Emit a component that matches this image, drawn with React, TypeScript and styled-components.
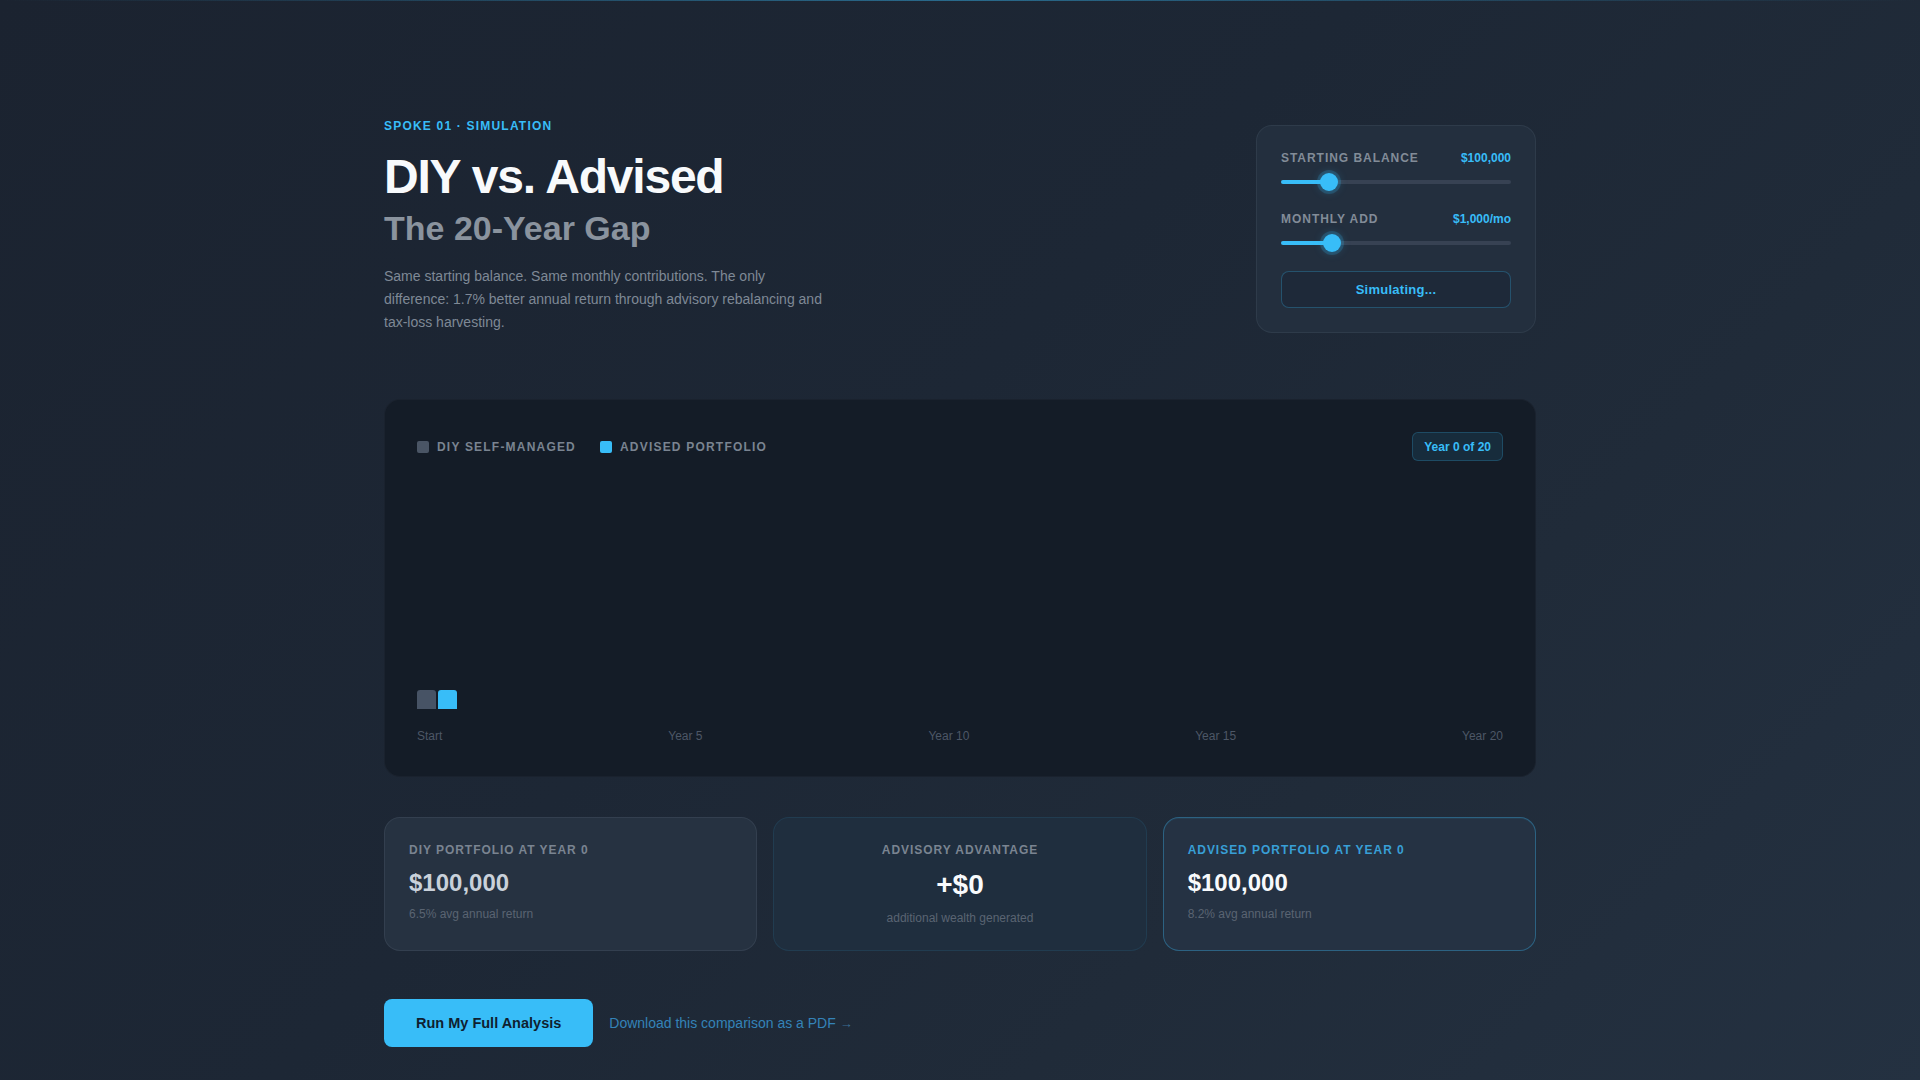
import React from 'react';
import styled, {createGlobalStyle} from 'styled-components';

const GlobalStyle = createGlobalStyle`
    * {
        box-sizing: border-box;
    }

    body {
        margin: 0;
        font-family: "Liberation Sans", Arial, sans-serif;
        background: #1c2532;
        -webkit-font-smoothing: antialiased;
    }
`;

const sky = '#38bdf8';

type SliderProps = {
    value: number
    min: number
    max: number
}

const Slider = ({value, min, max}: SliderProps) => {
    const pct = (value - min) / (max - min);
    // thumb is 18px wide, keep it inside the track
    const center = `calc(9px + (100% - 18px) * ${pct})`;
    return (
        <SliderWrap>
            <Track>
                <Fill style={{width: center}}/>
            </Track>
            <Thumb style={{left: center}}/>
        </SliderWrap>
    );
};

const years = Array.from({length: 21}, (_, i) => i);
const maxValue = 1200000;
const chartHeight = 228;

const barHeight = (year: number, v: number) => (year === 0 ? (v / maxValue) * chartHeight : 0);

export default function App() {
    return (
        <Page>
            <GlobalStyle/>
            <Container>
                <Header>
                    <Intro>
                        <Eyebrow>Spoke 01 · Simulation</Eyebrow>
                        <Title>DIY vs. Advised</Title>
                        <Subtitle>The 20-Year Gap</Subtitle>
                        <Lead>
                            Same starting balance. Same monthly contributions. The only difference: 1.7% better
                            annual return through advisory rebalancing and tax-loss harvesting.
                        </Lead>
                    </Intro>

                    <Controls>
                        <ControlRow>
                            <ControlLabel>Starting Balance</ControlLabel>
                            <ControlValue>$100,000</ControlValue>
                        </ControlRow>
                        <Slider value={100000} min={10000} max={500000}/>

                        <ControlRow $spaced>
                            <ControlLabel>Monthly Add</ControlLabel>
                            <ControlValue>$1,000/mo</ControlValue>
                        </ControlRow>
                        <Slider value={1000} min={0} max={5000}/>

                        <SimButton>Simulating...</SimButton>
                    </Controls>
                </Header>

                <ChartPanel>
                    <ChartHeader>
                        <Legend>
                            <LegendItem>
                                <Swatch $color="#4a5565"/>
                                DIY Self-Managed
                            </LegendItem>
                            <LegendItem>
                                <Swatch $color={sky}/>
                                Advised Portfolio
                            </LegendItem>
                        </Legend>
                        <YearBadge>Year 0 of 20</YearBadge>
                    </ChartHeader>

                    <Bars>
                        {years.map(year => (
                            <BarGroup key={year}>
                                <Bar $color="#475365" style={{height: barHeight(year, 100000)}}/>
                                <Bar $color={sky} style={{height: barHeight(year, 100000)}}/>
                            </BarGroup>
                        ))}
                    </Bars>

                    <Axis>
                        <span>Start</span>
                        <span>Year 5</span>
                        <span>Year 10</span>
                        <span>Year 15</span>
                        <span>Year 20</span>
                    </Axis>
                </ChartPanel>

                <Stats>
                    <StatCard $variant="diy">
                        <StatLabel $variant="diy">DIY Portfolio at Year 0</StatLabel>
                        <StatValue $variant="diy">$100,000</StatValue>
                        <StatNote>6.5% avg annual return</StatNote>
                    </StatCard>
                    <StatCard $variant="gap">
                        <StatLabel $variant="gap">Advisory Advantage</StatLabel>
                        <StatValue $variant="gap">+$0</StatValue>
                        <StatNote>additional wealth generated</StatNote>
                    </StatCard>
                    <StatCard $variant="advised">
                        <StatLabel $variant="advised">Advised Portfolio at Year 0</StatLabel>
                        <StatValue $variant="advised">$100,000</StatValue>
                        <StatNote>8.2% avg annual return</StatNote>
                    </StatCard>
                </Stats>

                <Actions>
                    <PrimaryButton>Run My Full Analysis</PrimaryButton>
                    <PdfLink href="#">Download this comparison as a PDF <Arrow>→</Arrow></PdfLink>
                </Actions>
            </Container>
        </Page>
    );
}

type Variant = 'diy' | 'gap' | 'advised'

const Page = styled.div`
    position: relative;
    min-height: 100vh;
    background: linear-gradient(135deg, #1b2330 0%, #1d2735 45%, #202b39 70%, #243141 100%);

    &::before {
        content: "";
        position: absolute;
        top: 0;
        left: 0;
        right: 0;
        height: 1px;
        background: linear-gradient(90deg, transparent 0%, rgba(56, 189, 248, 0.45) 50%, transparent 100%);
    }
`;

const Container = styled.div`
    max-width: 1152px;
    margin: 0 auto;
    padding: 118px 0 40px;
`;

const Header = styled.header`
    display: flex;
    justify-content: space-between;
    align-items: flex-start;
`;

const Intro = styled.div`
    display: flex;
    flex-direction: column;
`;

const Eyebrow = styled.div`
    font-size: 12px;
    line-height: 16px;
    font-weight: 700;
    letter-spacing: 0.1em;
    text-transform: uppercase;
    color: ${sky};
`;

const Title = styled.h1`
    margin: 17px 0 0;
    font-size: 48px;
    line-height: 1.1;
    font-weight: 700;
    letter-spacing: -0.025em;
    color: #f8fafc;
`;

const Subtitle = styled.h2`
    margin: 4px 0 0;
    font-size: 34px;
    line-height: 1.2;
    font-weight: 700;
    color: #8a939e;
`;

const Lead = styled.p`
    margin: 16px 0 0;
    max-width: 440px;
    font-size: 14px;
    line-height: 23.3px;
    color: #7f8996;
`;

const Controls = styled.div`
    width: 280px;
    margin-top: 7px;
    padding: 25px 24px 24px;
    display: flex;
    flex-direction: column;
    background: #232f3e;
    border: 1px solid rgba(148, 163, 184, 0.1);
    border-radius: 16px;
`;

const ControlRow = styled.div<{ $spaced?: boolean }>`
    display: flex;
    justify-content: space-between;
    align-items: center;
    height: 14px;
    margin-top: ${p => (p.$spaced ? '20px' : '0')};
`;

const ControlLabel = styled.span`
    font-size: 12px;
    font-weight: 700;
    letter-spacing: 0.08em;
    text-transform: uppercase;
    color: #828c98;
`;

const ControlValue = styled.span`
    font-size: 12px;
    font-weight: 700;
    color: ${sky};
`;

const SliderWrap = styled.div`
    position: relative;
    height: 20px;
    margin-top: 7px;
    display: flex;
    align-items: center;
`;

const Track = styled.div`
    width: 100%;
    height: 4px;
    border-radius: 2px;
    background: #374253;
    overflow: hidden;
`;

const Fill = styled.div`
    height: 100%;
    background: ${sky};
`;

const Thumb = styled.div`
    position: absolute;
    top: 1px;
    width: 18px;
    height: 18px;
    margin-left: -9px;
    border-radius: 50%;
    background: ${sky};
    box-shadow: 0 0 0 3px rgba(56, 189, 248, 0.18), 0 0 10px rgba(56, 189, 248, 0.35);
`;

const SimButton = styled.button`
    margin-top: 18px;
    height: 37px;
    border-radius: 8px;
    border: 1px solid rgba(56, 189, 248, 0.28);
    background: rgba(15, 23, 42, 0.25);
    color: ${sky};
    font-family: inherit;
    font-size: 13px;
    font-weight: 700;
    letter-spacing: 0.02em;
    cursor: pointer;
`;

const ChartPanel = styled.section`
    margin-top: 65px;
    padding: 32px;
    background: #141c27;
    border: 1px solid rgba(148, 163, 184, 0.05);
    border-radius: 16px;
`;

const ChartHeader = styled.div`
    display: flex;
    justify-content: space-between;
    align-items: center;
    height: 29px;
`;

const Legend = styled.div`
    display: flex;
    gap: 24px;
`;

const LegendItem = styled.div`
    display: flex;
    align-items: center;
    gap: 8px;
    font-size: 12px;
    font-weight: 700;
    letter-spacing: 0.1em;
    text-transform: uppercase;
    color: #7a8491;
`;

const Swatch = styled.span<{ $color: string }>`
    width: 12px;
    height: 12px;
    border-radius: 2px;
    background: ${p => p.$color};
`;

const YearBadge = styled.div`
    height: 29px;
    padding: 0 11px;
    display: flex;
    align-items: center;
    font-size: 12px;
    font-weight: 700;
    color: ${sky};
    background: rgba(56, 189, 248, 0.1);
    border: 1px solid rgba(56, 189, 248, 0.22);
    border-radius: 6px;
`;

const Bars = styled.div`
    margin-top: 20px;
    height: ${chartHeight}px;
    display: flex;
    align-items: flex-end;
    gap: 12px;
`;

const BarGroup = styled.div`
    flex: 1;
    display: flex;
    align-items: flex-end;
    gap: 2px;
`;

const Bar = styled.div<{ $color: string }>`
    flex: 1;
    background: ${p => p.$color};
    border-radius: 3px 3px 0 0;
`;

const Axis = styled.div`
    margin-top: 19px;
    display: flex;
    justify-content: space-between;
    font-size: 12px;
    line-height: 16px;
    color: #4d5766;
`;

const Stats = styled.div`
    margin-top: 40px;
    display: grid;
    grid-template-columns: repeat(3, 1fr);
    gap: 16px;
`;

const cardBg: Record<Variant, string> = {
    diy: '#263241',
    gap: '#1f2e3e',
    advised: '#253243',
};

const cardBorder: Record<Variant, string> = {
    diy: 'rgba(148, 163, 184, 0.12)',
    gap: 'rgba(56, 189, 248, 0.1)',
    advised: 'rgba(56, 189, 248, 0.35)',
};

const StatCard = styled.div<{ $variant: Variant }>`
    padding: 24px;
    display: flex;
    flex-direction: column;
    align-items: ${p => (p.$variant === 'gap' ? 'center' : 'flex-start')};
    background: ${p => cardBg[p.$variant]};
    border: 1px solid ${p => cardBorder[p.$variant]};
    border-radius: 16px;
    box-shadow: ${p => (p.$variant === 'advised' ? 'inset 0 1px 0 rgba(56, 189, 248, 0.08)' : 'none')};
`;

const StatLabel = styled.div<{ $variant: Variant }>`
    font-size: 12px;
    line-height: 16px;
    font-weight: 700;
    letter-spacing: 0.08em;
    text-transform: uppercase;
    color: ${p => (p.$variant === 'advised' ? '#389fd6' : '#7a8491')};
`;

const StatValue = styled.div<{ $variant: Variant }>`
    margin-top: 10px;
    font-size: ${p => (p.$variant === 'gap' ? '28px' : '24px')};
    line-height: ${p => (p.$variant === 'gap' ? '34px' : '30px')};
    font-weight: 700;
    color: ${p => (p.$variant === 'diy' ? '#c9d1da' : '#f8fafc')};
`;

const StatNote = styled.div`
    margin-top: 8px;
    font-size: 12px;
    line-height: 16px;
    color: #5a6472;
`;

const Actions = styled.div`
    margin-top: 48px;
    display: flex;
    align-items: center;
    gap: 16px;
`;

const PrimaryButton = styled.button`
    height: 48px;
    padding: 0 32px;
    border: none;
    border-radius: 8px;
    background: ${sky};
    color: #0f1f30;
    font-family: inherit;
    font-size: 14.5px;
    font-weight: 700;
    cursor: pointer;
`;

const PdfLink = styled.a`
    font-size: 14px;
    color: #3483b8;
    text-decoration: none;
`;

const Arrow = styled.span`
    font-size: 13px;
    color: #3a6f96;
`;
